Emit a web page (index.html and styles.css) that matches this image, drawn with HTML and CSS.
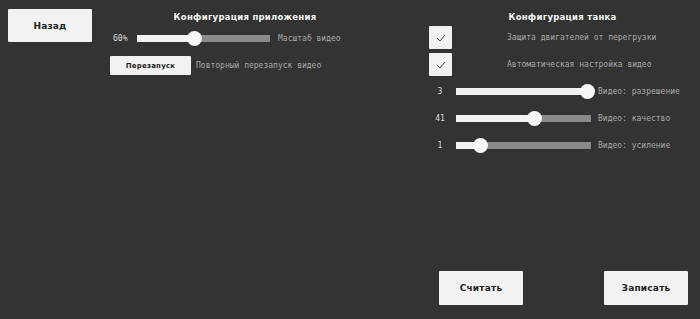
FILE: index.html
```html
<!DOCTYPE html>
<html lang="ru">

<head>
    <meta charset="UTF-8">
    <meta name="viewport" content="width=device-width, initial-scale=1.0">
    <title>Конфигурация</title>
    <link rel="stylesheet" href="styles.css">
</head>

<body>
    <div class="side">
        <button class="btn back">Назад</button>
    </div>

    <div class="app">
        <h1 class="title">Конфигурация приложения</h1>
        <div class="row slider-row">
            <span class="value app-value">60%</span>
            <div class="track app-track">
                <div class="fill" style="width:57px"></div>
                <div class="thumb"></div>
                <div class="rest"></div>
            </div>
            <span class="label">Масштаб видео</span>
        </div>
        <div class="row restart-row">
            <button class="btn small">Перезапуск</button>
            <span class="label">Повторный перезапуск видео</span>
        </div>
    </div>

    <div class="tank">
        <h1 class="title">Конфигурация танка</h1>
        <div class="row check-row">
            <div class="check">
                <svg width="10" height="8" viewBox="0 0 10 8"><polyline points="1,4 4,7 9,1" fill="none" stroke="#444" stroke-width="1"/></svg>
            </div>
            <span class="label">Защита двигателей от перегрузки</span>
        </div>
        <div class="row check-row">
            <div class="check">
                <svg width="10" height="8" viewBox="0 0 10 8"><polyline points="1,4 4,7 9,1" fill="none" stroke="#444" stroke-width="1"/></svg>
            </div>
            <span class="label">Автоматическая настройка видео</span>
        </div>

        <div class="sliders">
            <div class="row slider-row">
                <span class="value tank-value">3</span>
                <div class="track tank-track">
                    <div class="fill" style="width:131px"></div>
                    <div class="thumb"></div>
                    <div class="rest"></div>
                </div>
                <span class="label">Видео: разрешение</span>
            </div>
            <div class="row slider-row">
                <span class="value tank-value">41</span>
                <div class="track tank-track">
                    <div class="fill" style="width:78px"></div>
                    <div class="thumb"></div>
                    <div class="rest"></div>
                </div>
                <span class="label">Видео: качество</span>
            </div>
            <div class="row slider-row">
                <span class="value tank-value">1</span>
                <div class="track tank-track">
                    <div class="fill" style="width:24px"></div>
                    <div class="thumb"></div>
                    <div class="rest"></div>
                </div>
                <span class="label">Видео: усиление</span>
            </div>
        </div>

        <div class="footer">
            <button class="btn big">Считать</button>
            <button class="btn big">Записать</button>
        </div>
    </div>
</body>

</html>
```

FILE: styles.css
```css
body {
    margin: 0;
    height: 319px;
    background-color: #333333;
    display: flex;
    font-family: "DejaVu Sans Mono", monospace;
    color: #aaaaaa;
}

.btn {
    background-color: #f2f2f2;
    color: #222222;
    border: none;
    border-radius: 1px;
    padding: 0;
    font-family: "DejaVu Sans", sans-serif;
    font-weight: bold;
    letter-spacing: 0.2px;
    cursor: pointer;
}

.side {
    width: 92px;
    padding: 9px 0 0 8px;
}

.back {
    width: 84px;
    height: 33px;
    font-size: 9px;
}

.title {
    margin: 0;
    height: 15px;
    line-height: 15px;
    font-family: "DejaVu Sans", sans-serif;
    font-size: 8.5px;
    font-weight: bold;
    letter-spacing: 0.25px;
    text-align: center;
    color: #f4f4f4;
}

.app {
    width: 290px;
    padding-top: 10px;
}

.tank {
    width: 275px;
    margin-left: 35px;
    padding-top: 10px;
    display: flex;
    flex-direction: column;
}

.row {
    display: flex;
    align-items: center;
}

.label {
    font-size: 8px;
    color: #a8a8a8;
    white-space: nowrap;
}

.value {
    font-size: 8px;
    color: #dddddd;
}

.slider-row {
    height: 15px;
}

.app .slider-row {
    margin-top: 6px;
    padding-left: 13px;
}

.app-value {
    width: 24px;
}

.track {
    display: flex;
    align-items: center;
    height: 15px;
}

.app-track {
    width: 133px;
    margin-right: 8px;
}

.tank-track {
    width: 135px;
    margin-right: 7px;
}

.fill {
    height: 7px;
    background-color: #f2f2f2;
    flex-shrink: 0;
}

.rest {
    flex: 1;
    height: 7px;
    background-color: #8a8a8a;
}

.thumb {
    width: 15px;
    height: 15px;
    margin: 0 -7.5px;
    border-radius: 50%;
    background-color: #f7f7f7;
    position: relative;
    z-index: 1;
    flex-shrink: 0;
}

.restart-row {
    margin-top: 10px;
    padding-left: 10px;
}

.small {
    width: 81px;
    height: 19px;
    font-size: 7px;
    margin-right: 5px;
}

.check-row {
    padding-left: 4px;
    margin-top: 1px;
}

.check-row + .check-row {
    margin-top: 4px;
}

.check {
    width: 23px;
    height: 23px;
    background-color: #f2f2f2;
    border-radius: 1px;
    display: flex;
    justify-content: center;
    align-items: center;
    margin-right: 55px;
}

.sliders {
    margin-top: 8px;
    display: flex;
    flex-direction: column;
    gap: 12px;
}

.tank-value {
    width: 22px;
    margin-left: 4px;
    margin-right: 5px;
    text-align: center;
}

.footer {
    margin-top: auto;
    padding: 0 12px 14px 14px;
    display: flex;
    justify-content: space-between;
}

.big {
    width: 84px;
    height: 34px;
    font-size: 9px;
}
```
